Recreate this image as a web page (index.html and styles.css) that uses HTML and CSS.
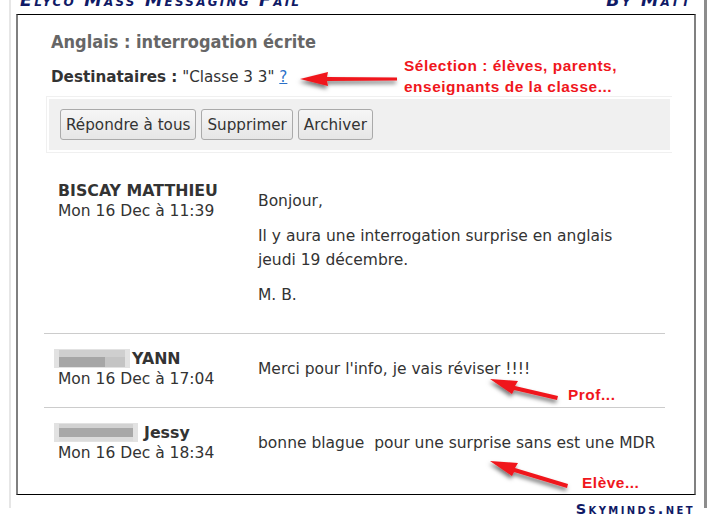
FILE: index.html
```html
<!DOCTYPE html>
<html lang="fr">
<head>
  <meta charset="UTF-8">
  <title>Elyco Mass Messaging Fail</title>
  <link rel="stylesheet" href="styles.css">
</head>
<body>
  <div class="strip">
    <header class="strip-head">
      <span>Elyco Mass Messaging Fail</span>
      <span>By Matt</span>
    </header>

    <div class="panel">
      <h2 class="subject">Anglais : interrogation écrite</h2>
      <p class="recipients"><strong>Destinataires :</strong> "Classe 3 3" <a href="#">?</a></p>

      <div class="toolbar-wrap">
        <div class="toolbar">
          <button>Répondre à tous</button>
          <button>Supprimer</button>
          <button>Archiver</button>
        </div>
      </div>

      <div class="message first">
        <div class="sender">
          <div class="name">BISCAY MATTHIEU</div>
          <div class="date">Mon 16 Dec à 11:39</div>
        </div>
        <div class="body">
          <p>Bonjour,</p>
          <p>Il y aura une interrogation surprise en anglais<br>jeudi 19 décembre.</p>
          <p>M. B.</p>
        </div>
      </div>

      <div class="message">
        <div class="sender">
          <div class="name"><span class="blur blur-a"></span>YANN</div>
          <div class="date">Mon 16 Dec à 17:04</div>
        </div>
        <div class="body"><p>Merci pour l'info, je vais réviser !!!!</p></div>
      </div>

      <div class="message">
        <div class="sender">
          <div class="name"><span class="blur blur-b"></span>Jessy</div>
          <div class="date">Mon 16 Dec à 18:34</div>
        </div>
        <div class="body"><p>bonne blague&nbsp; pour une surprise sans est une MDR</p></div>
      </div>

      <!-- red notes drawn over the screenshot -->
      <svg class="arrows" width="676" height="479" viewBox="0 0 676 479">
        <defs>
          <filter id="shade" x="-20%" y="-60%" width="140%" height="220%">
            <feDropShadow dx="-1" dy="3" stdDeviation="2" flood-color="#000" flood-opacity="0.55"/>
          </filter>
        </defs>
        <g fill="#f0161c" filter="url(#shade)">
          <path d="M282 64 L310 57 L309 62 L379 62.5 L379 65.5 L309 66 L310 71 Z"/>
          <path d="M472 364 L500 366 L497 371 L540 381 L539 385 L496 375 L494 379 Z"/>
          <path d="M472 446 L500 448 L497 453 L550 469 L549 473 L496 457 L494 461 Z"/>
        </g>
      </svg>
      <div class="note note-select">Sélection : élèves, parents,<br>enseignants de la classe...</div>
      <div class="note note-prof">Prof...</div>
      <div class="note note-eleve">Elève...</div>
    </div>

    <footer class="strip-foot">Skyminds.net</footer>
  </div>
</body>
</html>
```

FILE: styles.css
```css
* {
  box-sizing: border-box;
}

html, body {
  margin: 0;
  height: 515px;
  overflow: hidden;
  background: #fff;
}

body {
  font-family: "DejaVu Sans", Verdana, sans-serif;
  color: #333;
}

.strip {
  width: 698px;
  height: 515px;
  margin-left: 9px;
  border-left: 2px solid #e6e6e6;
  border-right: 3px solid #8c8c8c;
  padding-left: 5px;
}

.strip-head {
  display: flex;
  justify-content: space-between;
  height: 14px;
  margin-top: -7px;
  margin-bottom: 7px;
  padding: 0 12px 0 4px;
  font-size: 17.5px;
  line-height: 14px;
  font-weight: bold;
  font-style: italic;
  font-variant: small-caps;
  letter-spacing: 2.2px;
  color: #101a66;
  white-space: nowrap;
}

.panel {
  position: relative;
  width: 680px;
  height: 481px;
  border-top: 1px solid #000;
  border-left: 2px solid #808080;
  border-right: 2px solid #808080;
  border-bottom: 1px solid #000;
  padding: 16px 29px 0 26px;
}

.subject {
  margin: 0 0 0 7px;
  font-family: "DejaVu Sans Condensed", "DejaVu Sans", sans-serif;
  font-size: 18px;
  line-height: 22px;
  font-weight: bold;
  color: #666;
}

.recipients {
  margin: 14px 0 0 7px;
  line-height: 20px;
  font-size: 15.2px;
}

.recipients a {
  color: #2a70c8;
}

.toolbar-wrap {
  width: 626px;
  margin-top: 9px;
  margin-left: 2px;
  padding: 2px;
  border: 1px solid #f0f0f0;
  border-right: 0;
}

.toolbar {
  display: flex;
  gap: 5px;
  height: 51px;
  padding: 10px 11px;
  background: #f0f0f0;
}

.toolbar button {
  height: 31px;
  padding: 0 5px;
  border: 1px solid #aaa;
  border-radius: 3px;
  background: linear-gradient(#f6f6f6, #e6e6e6);
  font-family: inherit;
  font-size: 15.2px;
  color: #333;
}

.message {
  display: flex;
  width: 621px;
  height: 74px;
  border-top: 1px solid #ccc;
  padding: 14px 0 0 14px;
}

.message.first {
  border-top: 0;
  height: 178px;
  padding-top: 25px;
  margin-top: 2px;
}

.sender {
  width: 200px;
  flex: none;
}

.name {
  display: flex;
  align-items: center;
  height: 20px;
  font-weight: bold;
  font-size: 15.8px;
  color: #333;
  white-space: nowrap;
}

.date {
  margin-top: 1px;
  font-size: 15.5px;
  line-height: 20px;
  white-space: nowrap;
}

.body {
  font-size: 15.5px;
  line-height: 24px;
  padding-top: 9px;
  white-space: nowrap;
}

.body p {
  margin: 0 0 11px;
}

/* names hidden in the original with a pixel blur */
.blur {
  height: 19px;
  margin-left: -4px;
  border: solid #e2e2e2;
  border-width: 1px 5px;
}

.blur-a {
  width: 76px;
  margin-right: 2px;
  background: linear-gradient(90deg, #a6a6a6 70%, #c4c4c4 70%) 0 100% / 100% 10px no-repeat, #cfcfcf;
}

.blur-b {
  width: 84px;
  margin-right: 6px;
  background: linear-gradient(#d2d2d2 25%, #a8a8a8 25%, #a8a8a8 75%, #dcdcdc 75%);
}

.arrows {
  position: absolute;
  top: 0;
  left: 0;
}

.note {
  position: absolute;
  font-family: "Liberation Sans", Arial, sans-serif;
  font-weight: bold;
  font-size: 15.4px;
  line-height: 21px;
  letter-spacing: 0.55px;
  color: #f0161c;
  white-space: nowrap;
}

.note-select {
  left: 386px;
  top: 40px;
}

.note-prof {
  left: 550px;
  top: 369px;
}

.note-eleve {
  left: 564px;
  top: 457px;
}

.strip-foot {
  margin-top: 7px;
  padding-right: 9px;
  text-align: right;
  font-size: 14.5px;
  line-height: 14px;
  font-weight: bold;
  font-variant: small-caps;
  letter-spacing: 2.4px;
  color: #101a66;
}
```
